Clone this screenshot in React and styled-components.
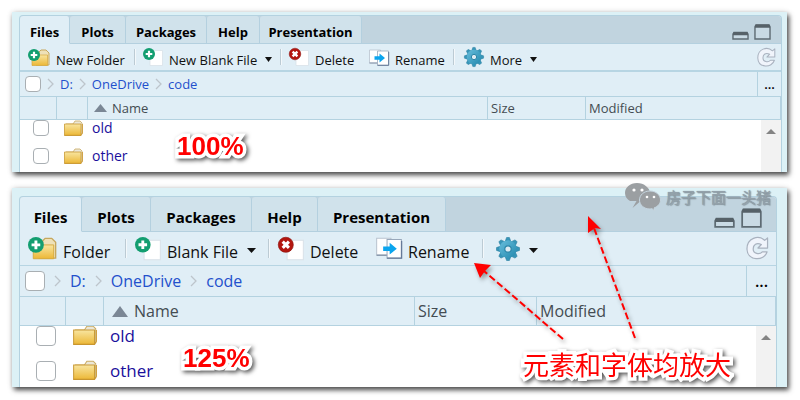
import React from "react";
import styled, { createGlobalStyle, ThemeProvider, css } from "styled-components";

const GlobalStyle = createGlobalStyle`
  *, *::before, *::after { box-sizing: border-box; }
  body {
    margin: 0;
    background: #fff;
    font-family: "Open Sans", "Noto Sans", "Noto Sans CJK SC", sans-serif;
    color: #111;
  }
  button { font: inherit; color: inherit; }
`;

const normal = {
  font: 13, tabFont: 13, fileFont: 14, padTop: 3, padRight: 5,
  tabBar: 27, toolbar: 26, toolbarLine: 2, crumbs: 24, head: 22, row: 28, rowShift: -6, view: 52,
  tabs: [50, 56, 81, 53, 102],
  icon: 20, gear: 20, folderIcon: 22, caret: 7, caretGap: 9,
  sepGap: 8, gearGap: 10, buttons: [106, 137, 80, 84],
  labels: ["New Folder", "New Blank File", "More"],
  check: 16, crumbGap: 6, dots: 24, cols: [37, 31, 400, 98], checkPad: 13,
  folder: 19, namePad: 4, sortPad: 6, sort: 13, sortGap: 5,
  winTop: 8, winRight: 10, winGap: 5, win: 17, refresh: 19, refreshRight: 5, scroll: 20,
};

const large = {
  font: 16, tabFont: 15, fileFont: 17, padTop: 8, padRight: 10,
  tabBar: 34, toolbar: 33, toolbarLine: 1, crumbs: 30, head: 28, row: 35, rowShift: -8, view: 61,
  tabs: [62, 69, 101, 66, 128],
  icon: 26, gear: 24, folderIcon: 29, caret: 9, caretGap: 10,
  sepGap: 9, gearGap: 13, buttons: [97, 133, 98, 106],
  labels: ["Folder", "Blank File", ""],
  check: 20, crumbGap: 9, dots: 30, cols: [46, 38, 311, 122], checkPad: 16,
  folder: 24, namePad: 6, sortPad: 8, sort: 16, sortGap: 6,
  winTop: 11, winRight: 14, winGap: 6, win: 21, refresh: 23, refreshRight: 7, scroll: 20,
};

const px = (key) => ({ theme }) => `${theme[key]}px`;

const Page = styled.main`
  position: relative;
  display: flex;
  flex-direction: column;
  gap: 16px;
  padding: 12px 13px 12px 12px;
`;

const Panel = styled.section`
  position: relative;
  padding: ${px("padTop")} ${px("padRight")} 0 7px;
  background: #dcf1f6;
  box-shadow: 2px 3px 5px rgba(0, 0, 0, 0.7), 0 0 6px rgba(0, 0, 0, 0.12);
  font-size: ${px("font")};
  line-height: 20px;
`;

const Frame = styled.div`
  border: 1px solid #b4d2e0;
  border-bottom: 0;
  border-radius: 4px 4px 0 0;
  background: #e0eef6;
  overflow: hidden;
`;

const TabBar = styled.div`
  display: flex;
  height: ${({ theme }) => theme.tabBar + 1}px;
  background: #c1d4df;
`;

const Tab = styled.button`
  min-width: ${({ $w }) => $w}px;
  padding: 5px 0 0;
  border: 0;
  border-right: 1px solid #b4d0df;
  border-bottom: 1px solid ${({ $active }) => ($active ? "#e0eef6" : "#b4d0df")};
  border-radius: 3px 3px 0 0;
  background: ${({ $active }) => ($active ? "#e0eef6" : "#d0e2eb")};
  font-size: ${px("tabFont")};
  font-weight: 700;
  text-align: center;
  white-space: nowrap;
  color: #000;
`;

const TabFill = styled.div`
  flex: 1;
  display: flex;
  align-items: flex-start;
  justify-content: flex-end;
  gap: ${px("winGap")};
  padding: ${px("winTop")} ${px("winRight")} 0 0;
  border-bottom: 1px solid #b4d0df;
`;

const IconButton = styled.button`
  display: flex;
  padding: 0;
  border: 0;
  background: none;
`;

const Toolbar = styled.div`
  display: flex;
  align-items: center;
  height: ${({ theme }) => theme.toolbar + theme.toolbarLine}px;
  padding: 0 ${px("refreshRight")} 0 8px;
  border-bottom: ${px("toolbarLine")} solid #b7d5e3;
`;

const ToolButton = styled.button`
  display: flex;
  align-items: center;
  gap: 6px;
  flex: none;
  width: ${({ $w }) => ($w ? `${$w}px` : "auto")};
  padding: 0;
  border: 0;
  background: none;
  white-space: nowrap;
`;

const ToolLabel = styled.span`
  padding-top: 6px;
`;

const Separator = styled.span`
  width: 2px;
  height: 60%;
  margin-right: ${({ $gap }) => $gap - 1}px;
  border-left: 1px solid #bccbd4;
  border-right: 1px solid #f3f8fb;
`;

const Caret = styled.svg`
  width: ${px("caret")};
  height: 5px;
  margin: 4px 0 0 ${({ theme }) => theme.caretGap - 7}px;
`;

const Push = styled.span`
  flex: 1;
`;

const Crumbs = styled.nav`
  display: flex;
  align-items: center;
  gap: ${px("crumbGap")};
  height: ${({ theme }) => theme.crumbs + 1}px;
  padding-left: 5px;
  border-bottom: 1px solid #b4d2e0;
`;

const Crumb = styled.a`
  color: #2350cc;
  text-decoration: none;
`;

const Dots = styled.button`
  align-self: stretch;
  width: ${px("dots")};
  margin-left: auto;
  padding: 0;
  border: 0;
  border-left: 1px solid #b4d2e0;
  background: none;
  color: #000;
  font-weight: 600;
`;

const Check = styled.input.attrs({ type: "checkbox" })`
  appearance: none;
  display: block;
  flex: none;
  width: ${px("check")};
  height: ${px("check")};
  margin: 0;
  border: 1px solid #a9afb3;
  border-radius: 4px;
  background: #fff;
`;

const Table = styled.table`
  width: 100%;
  table-layout: fixed;
  border-collapse: separate;
  border-spacing: 0;
`;

const HeadCell = styled.th`
  height: ${({ theme }) => theme.head + 1}px;
  padding: 0 0 0 ${({ $sorted, theme }) => ($sorted ? theme.sortPad : 3)}px;
  border-right: 1px solid #b4d2e0;
  border-bottom: 1px solid #b4d2e0;
  color: #444c52;
  font-weight: 400;
  text-align: left;
`;

const SortButton = styled.button`
  display: flex;
  align-items: center;
  gap: ${px("sortGap")};
  padding: 0;
  border: 0;
  background: none;
`;

const View = styled.div`
  display: flex;
  height: ${px("view")};
  background: #fff;
  overflow: hidden;
`;

const Rows = styled.div`
  flex: 1;
  min-width: 0;
  margin-top: ${px("rowShift")};
`;

const cellPads = {
  check: css`padding: 0 0 0 ${px("checkPad")};`,
  icon: css`padding: 0 0 0 7px;`,
  name: css`padding: 0 0 0 ${px("namePad")};`,
};

const Cell = styled.td`
  height: ${px("row")};
  ${({ $kind }) => cellPads[$kind] || css`padding: 0;`}
`;

const FileLink = styled.a`
  color: #1a0f9c;
  font-size: ${px("fileFont")};
  text-decoration: none;
`;

const ScrollTrack = styled.div`
  width: ${px("scroll")};
  padding: 9px 5px;
  background: #f2f2f2;
`;

const Svg = styled.svg`
  display: block;
  flex: none;
  overflow: visible;
`;

const Callout = styled.strong`
  position: absolute;
  left: ${({ $x }) => $x}px;
  bottom: ${({ $bottom }) => $bottom}px;
  color: #f00;
  font: ${({ $cjk }) => ($cjk ? '400 26px/30px "Noto Sans CJK SC", serif' : '700 26px/30px "Liberation Sans", sans-serif')};
  white-space: nowrap;
  -webkit-text-stroke: 7px #fff;
  paint-order: stroke fill;
  stroke-linejoin: round;
  filter: drop-shadow(2px 2px 2px rgba(0, 0, 0, 0.65));
`;

const ArrowLayer = styled.svg`
  position: absolute;
  left: 470px;
  top: 210px;
  width: 180px;
  height: 135px;
  pointer-events: none;
  overflow: visible;
  filter: drop-shadow(2px 3px 2px rgba(0, 0, 0, 0.35));
`;

const Watermark = styled.div`
  position: absolute;
  top: 183px;
  right: 29px;
  display: flex;
  align-items: center;
  gap: 5px;
  color: #93a1aa;
  font: 400 15px/28px "Noto Sans CJK SC", sans-serif;
  text-shadow: 0 0 1px #7d8b94, 1px 1px 1px #8a98a0;
`;

function Plus() {
  return (
    <>
      <circle cx="6" cy="6" r="6" fill="#139e70" />
      <path d="M6 2.7v6.6M2.7 6h6.6" stroke="#fff" strokeWidth="2.2" />
    </>
  );
}

function NewFolderIcon({ size }) {
  return (
    <Svg width={size} height={(size * 17) / 22} viewBox="0 0 22 17">
      <path d="M11 6V3l2-2h5l3 3v12H8" fill="#eee1b8" stroke="#c6a75c" />
      <path d="M4 6h15.5v10.5H4z" fill="url(#gold)" stroke="#d6a83b" strokeWidth=".7" />
      <Plus />
    </Svg>
  );
}

function PageIcon({ size, remove }) {
  return (
    <Svg width={size} height={(size * 18) / 20} viewBox="0 0 20 18">
      <path d="M7 2.5h12.5v15H7z" fill="#fff" stroke="#d9e1e8" strokeWidth=".8" />
      {remove ? (
        <>
          <circle cx="6" cy="6" r="5.8" fill="#b3160f" stroke="#8d1410" strokeWidth=".5" />
          <path d="M3.6 3.6l4.8 4.8M8.4 3.6L3.6 8.4" stroke="#fff" strokeWidth="2.4" />
        </>
      ) : (
        <Plus />
      )}
    </Svg>
  );
}

function RenameIcon({ size }) {
  return (
    <Svg width={size} height={(size * 17) / 20} viewBox="0 0 20 17">
      <path d="M.5 1h11v13H.5z" fill="#fff" stroke="#b9c3cf" strokeWidth=".8" />
      <path d="M.5 14h11" stroke="#8191a8" />
      <path d="M8.5 2h11v14.3h-11z" fill="#fff" stroke="#98a8bb" strokeWidth=".8" />
      <path d="M8.5 16.3h11.2V3" fill="none" stroke="#667a98" />
      <path d="M5.5 7.3h5V4.5L16 9l-5.5 4.5v-2.8h-5z" fill="#0ba5ee" />
    </Svg>
  );
}

const teeth = [0, 45, 90, 135, 180, 225, 270, 315];

function GearIcon({ size }) {
  return (
    <Svg width={size} height={size} viewBox="0 0 24 24" aria-label="More" role="img">
      <g fill="#3695b8" stroke="#287d9f" strokeWidth=".6">
        {teeth.map((a) => (
          <path key={a} d="M9 5l1.6-4.5h2.8L15 5z" transform={`rotate(${a} 12 12)`} />
        ))}
      </g>
      <circle cx="12" cy="12" r="8.7" fill="url(#gear)" />
      <circle cx="12" cy="12" r="3.2" fill="#dceaf2" stroke="#2b85a8" strokeWidth="1.2" />
    </Svg>
  );
}

function FolderIcon({ size }) {
  return (
    <Svg width={size} height={(size * 16) / 19} viewBox="0 0 19 16">
      <path d="M2 4h7l2-3h5l2 2v11H2z" fill="#ebe7d8" stroke="#c9aa61" strokeWidth=".8" />
      <path d="M.5 4h16.5v11.5H.5z" fill="url(#gold)" stroke="#c99a36" strokeWidth=".8" />
      <path d="M.5 15.3h16.7L18.5 13V4" fill="none" stroke="#c9952c" strokeWidth=".8" />
    </Svg>
  );
}

function RefreshIcon({ size }) {
  return (
    <Svg width={size} height={size} viewBox="0 0 24 24">
      <path
        d="M22.5 1v10.5H12.5l3.5-3.7C11 5.5 7.500 8 7.500 12.500c0 5 6.500 6.500 9.500 3h5C19 25.500 1.500 25.500 1 12.500 1 1 13-2.500 19.500 3.500z"
        fill="#f0f4fb"
        stroke="#a9b2bf"
        strokeWidth="1.3"
        strokeLinejoin="round"
      />
    </Svg>
  );
}

function WindowIcon({ size, collapsed }) {
  const h = collapsed ? 9 : 17;
  return (
    <Svg width={size} height={size - 1} viewBox="0 0 18 17">
      <g transform={collapsed ? "translate(0 8)" : undefined}>
        <path d={`M1 3l1-2h14l1 2v${h - 4}H1z`} fill="#c9dae4" stroke="#5e6b73" strokeWidth="1.5" />
        <path d="M1 4V2l1-1.5h14L17 2v2z" fill="#566168" />
      </g>
    </Svg>
  );
}

function Chevron({ tall }) {
  return (
    <Svg width="7" height={tall ? 14 : 12} viewBox="0 0 7 12">
      <path d="M1 1l5 5-5 5" fill="none" stroke="#bdc5cb" strokeWidth="1.3" />
    </Svg>
  );
}

function DownCaret() {
  return (
    <Caret viewBox="0 0 8 5" preserveAspectRatio="none">
      <path d="M0 0h8L4 5z" fill="#111" />
    </Caret>
  );
}

function FilesPane({ metrics: m, children }) {
  const cols = (
    <colgroup>
      {m.cols.map((w, i) => (
        <col key={i} width={w} />
      ))}
      <col />
    </colgroup>
  );
  return (
    <ThemeProvider theme={m}>
      <Panel>
        <Frame>
          <TabBar role="tablist">
            {["Files", "Plots", "Packages", "Help", "Presentation"].map((name, i) => (
              <Tab key={name} role="tab" aria-selected={i === 0} $active={i === 0} $w={m.tabs[i]}>
                {name}
              </Tab>
            ))}
            <TabFill>
              <IconButton aria-label="Minimize"><WindowIcon size={m.win} collapsed /></IconButton>
              <IconButton aria-label="Maximize"><WindowIcon size={m.win} /></IconButton>
            </TabFill>
          </TabBar>
          <Toolbar>
            <ToolButton $w={m.buttons[0]}>
              <NewFolderIcon size={m.folderIcon} />
              <ToolLabel>{m.labels[0]}</ToolLabel>
            </ToolButton>
            <Separator $gap={m.sepGap} />
            <ToolButton $w={m.buttons[1]}>
              <PageIcon size={m.icon} />
              <ToolLabel>{m.labels[1]}</ToolLabel>
              <DownCaret />
            </ToolButton>
            <Separator $gap={m.sepGap} />
            <ToolButton $w={m.buttons[2]}>
              <PageIcon size={m.icon} remove />
              <ToolLabel>Delete</ToolLabel>
            </ToolButton>
            <ToolButton $w={m.buttons[3]}>
              <RenameIcon size={m.icon} />
              <ToolLabel>Rename</ToolLabel>
            </ToolButton>
            <Separator $gap={m.gearGap} />
            <ToolButton>
              <GearIcon size={m.gear} />
              {m.labels[2] && <ToolLabel>{m.labels[2]}</ToolLabel>}
              <DownCaret />
            </ToolButton>
            <Push />
            <IconButton aria-label="Refresh"><RefreshIcon size={m.refresh} /></IconButton>
          </Toolbar>
          <Crumbs>
            <Check aria-label="Select all" />
            {["D:", "OneDrive", "code"].map((part) => (
              <React.Fragment key={part}>
                <Chevron tall={m.font > 13} />
                <Crumb href="#">{part}</Crumb>
              </React.Fragment>
            ))}
            <Dots aria-label="Go to directory">...</Dots>
          </Crumbs>
          <Table>
            {cols}
            <thead>
              <tr>
                <HeadCell />
                <HeadCell />
                <HeadCell $sorted>
                  <SortButton>
                    <Svg width={m.sort} height={m.sort - 5} viewBox="0 0 12 8" preserveAspectRatio="none">
                      <path d="M6 0l6 8H0z" fill="#7b8795" />
                    </Svg>
                    Name
                  </SortButton>
                </HeadCell>
                <HeadCell>Size</HeadCell>
                <HeadCell>Modified</HeadCell>
              </tr>
            </thead>
          </Table>
          <View>
            <Rows>
              <Table>
                {cols}
                <tbody>
                  {["old", "other"].map((name) => (
                    <tr key={name}>
                      <Cell $kind="check"><Check aria-label={name} /></Cell>
                      <Cell $kind="icon"><FolderIcon size={m.folder} /></Cell>
                      <Cell $kind="name"><FileLink href="#">{name}</FileLink></Cell>
                      <Cell />
                      <Cell />
                    </tr>
                  ))}
                </tbody>
              </Table>
            </Rows>
            <ScrollTrack>
              <Svg width="10" height="5" viewBox="0 0 10 5">
                <path d="M5 0l5 5H0z" fill="#848484" />
              </Svg>
            </ScrollTrack>
          </View>
        </Frame>
        {children}
      </Panel>
    </ThemeProvider>
  );
}

export default function App() {
  return (
    <>
      <GlobalStyle />
      <Page>
        <FilesPane metrics={normal}>
          <Callout $x={165} $bottom={11}>100%</Callout>
        </FilesPane>
        <FilesPane metrics={large}>
          <Callout $x={171} $bottom={14}>125%</Callout>
          <Callout $x={511} $bottom={8} $cjk>元素和字体均放大</Callout>
        </FilesPane>
        <ArrowLayer viewBox="470 210 180 135">
          <defs>
            <linearGradient id="gold" x1="0" y1="0" x2="0" y2="1">
              <stop offset="0" stopColor="#f8e5a0" />
              <stop offset="1" stopColor="#ecb735" />
            </linearGradient>
            <linearGradient id="gear" x1="0" y1="0" x2="1" y2="1">
              <stop offset="0" stopColor="#67bddc" />
              <stop offset="1" stopColor="#2489ae" />
            </linearGradient>
          </defs>
          <path d="M563 339L484 271M635 338L594 228" stroke="#f00" strokeWidth="2" strokeDasharray="7 3" />
          <path d="M474 263l17 2-6 6-5 7zM588 216l13 13-6-1-7 5z" fill="#f00" />
        </ArrowLayer>
        <Watermark>
          <Svg width="36" height="28" viewBox="0 0 36 28">
            <path d="M12 0C5 0 0 4.5 0 10c0 3.5 2 6.5 5 8l6.5 0-4 7 7-6C20 19 25 15 25 10S19 0 12 0z" fill="#9b9fa2" />
            <path d="M25 8c-6 0-10.5 4-10.5 9s4.5 9 10.5 9l2-.3 3 2.3-1-3c4-1.5 6.5-4.5 6.5-8 0-5-4.5-9-10.5-9z" fill="#9b9fa2" stroke="#c5d5df" />
            <g fill="#fff">
              <circle cx="9" cy="7" r="1.6" /><circle cx="17" cy="7" r="1.6" />
              <circle cx="22" cy="14" r="1.3" /><circle cx="29" cy="14" r="1.3" />
            </g>
          </Svg>
          房子下面一头猪
        </Watermark>
      </Page>
    </>
  );
}
